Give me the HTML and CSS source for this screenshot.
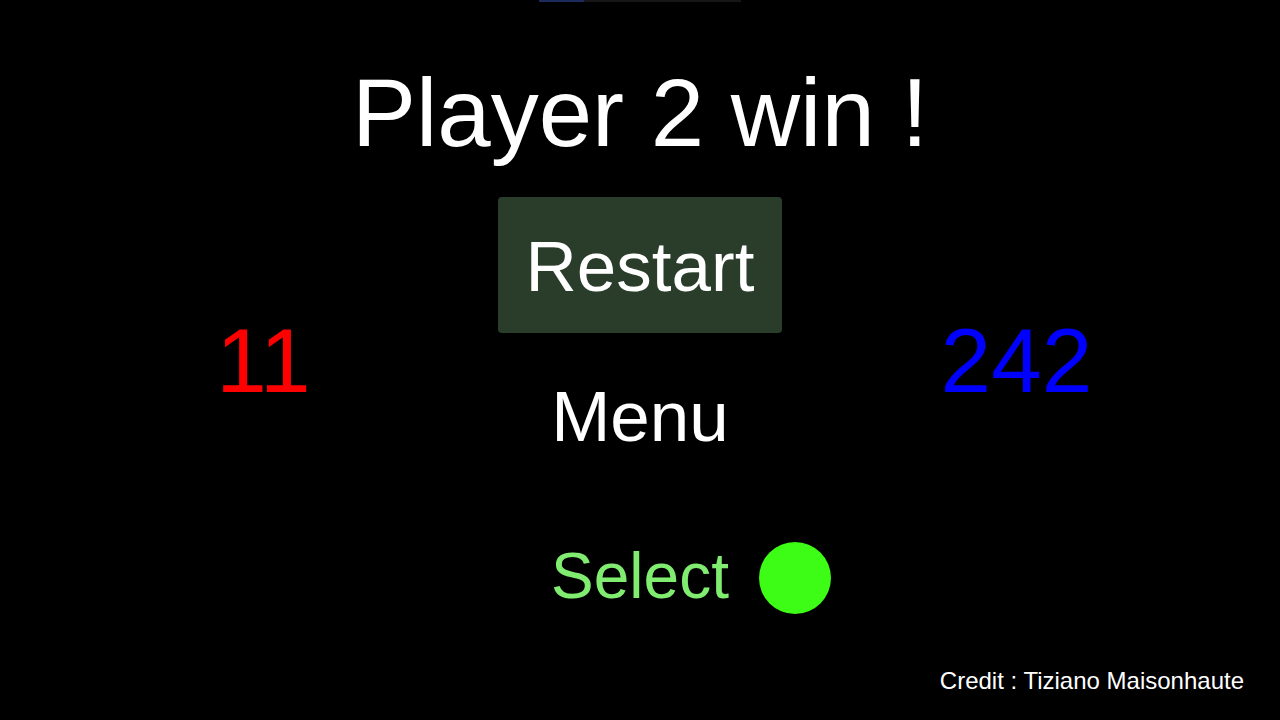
FILE: index.html
```html
<!DOCTYPE html>
<html lang="en">
<head>
<meta charset="utf-8">
<title>Player 2 win !</title>
<link rel="stylesheet" href="styles.css">
</head>
<body>
<div class="screen">
  <div class="score score-p1">11</div>
  <main class="center">
    <div class="topbar"><div class="topbar-fill"></div></div>
    <h1 class="title">Player 2 win !</h1>
    <div class="btn btn-active">Restart</div>
    <div class="btn-plain">Menu</div>
    <div class="select">Select<span class="dot"></span></div>
  </main>
  <div class="score score-p2">242</div>
  <footer class="credit">Credit : Tiziano Maisonhaute</footer>
</div>
</body>
</html>
```

FILE: styles.css
```css
html, body {
  margin: 0;
  padding: 0;
  background: #000;
}

.screen {
  width: 1280px;
  height: 720px;
  overflow: hidden;
  display: grid;
  grid-template-columns: 527px minmax(0, 1fr) 527px;
  grid-template-rows: minmax(0, 1fr) auto;
  font-family: "Liberation Sans", Arial, sans-serif;
  color: #fff;
}

.score {
  grid-row: 1 / 3;
  align-self: center;
  justify-self: center;
  font-size: 91px;
  line-height: 1;
  white-space: nowrap;
}

.score-p1 {
  grid-column: 1;
  color: #ff0000;
}

.score-p2 {
  grid-column: 3;
  color: #0000ff;
}

.center {
  grid-column: 2;
  grid-row: 1;
  display: flex;
  flex-direction: column;
  align-items: center;
}

.topbar {
  width: 202px;
  height: 2px;
  background: #161616;
  margin-bottom: 62.5px;
}

.topbar-fill {
  width: 45px;
  height: 100%;
  background: #1d2a5c;
}

.title {
  margin: 0 0 36.5px;
  font-size: 96px;
  font-weight: normal;
  line-height: 1;
  white-space: nowrap;
}

.btn {
  font-size: 71px;
  line-height: 1;
  white-space: nowrap;
  padding: 33.7px 27.6px 31.3px;
  border-radius: 4px;
}

.btn-active {
  background: #2a3d2a;
}

.btn-plain {
  margin-top: 47.7px;
  font-size: 71px;
  line-height: 1;
  white-space: nowrap;
}

.select {
  position: relative;
  margin-top: 91.9px;
  font-size: 64px;
  line-height: 1;
  color: #80ec70;
  white-space: nowrap;
}

.dot {
  position: absolute;
  left: calc(100% + 30px);
  top: -1.6px;
  width: 72px;
  height: 72px;
  border-radius: 50%;
  background: #3dfc16;
}

.credit {
  grid-column: 2 / 4;
  grid-row: 2;
  text-align: right;
  padding: 0 36px 27px 0;
  font-size: 24px;
  line-height: 1;
  white-space: nowrap;
}
```
